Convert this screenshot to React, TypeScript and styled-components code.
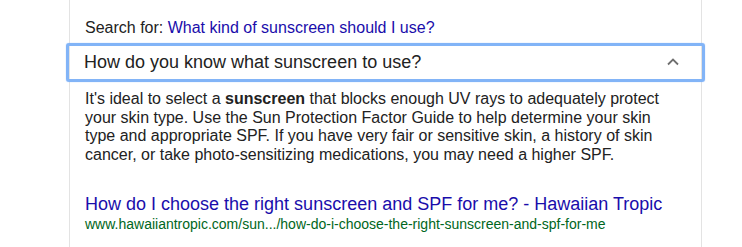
import styled, { createGlobalStyle } from "styled-components";

const GlobalStyle = createGlobalStyle`
  html, body {
    margin: 0;
    padding: 0;
    background: #ffffff;
  }
  body {
    font-family: "Liberation Sans", Arial, sans-serif;
    color: #222222;
    overflow: hidden;
  }
`;

const Card = styled.div`
  box-sizing: border-box;
  margin-left: 69px;
  width: 633px;
  height: 247px;
  border-left: 1px solid #e3e3e3;
  border-right: 1px solid #e3e3e3;
  padding-top: 19px;
`;

const SearchFor = styled.div`
  padding: 0 15px;
  font-size: 16px;
  line-height: 18px;
  color: #222222;

  a {
    color: #1a0dab;
    text-decoration: none;
  }
`;

const Question = styled.div`
  margin: 6px -4px 0;
  padding: 0 22px 0 15px;
  border: 3px solid #82b4f7;
  border-radius: 3px;
  box-shadow: 0 0 1px #82b4f7;
  display: flex;
  align-items: center;
  justify-content: space-between;
  font-size: 18px;
  line-height: 33px;
  color: #222222;
`;

const Chevron = styled.svg`
  width: 14px;
  height: 9px;
  display: block;
  margin-top: -2px;
`;

const Answer = styled.div`
  margin-top: 8px;
  padding: 0 26px 0 15px;
  font-size: 16px;
  line-height: 18.5px;
  color: #222222;

  b {
    font-weight: bold;
  }
`;

const Result = styled.div`
  margin-top: 29px;
  padding: 0 15px;
`;

const ResultTitle = styled.a`
  display: block;
  font-size: 18px;
  line-height: 22px;
  color: #1a0dab;
  text-decoration: none;
  white-space: nowrap;
`;

const ResultUrl = styled.div`
  font-size: 14px;
  line-height: 18px;
  color: #006621;
  white-space: nowrap;
`;

export default function App() {
  return (
    <>
      <GlobalStyle />
      <Card>
        <SearchFor>
          Search for: <a href="#">What kind of sunscreen should I use?</a>
        </SearchFor>
        <Question>
          <span>How do you know what sunscreen to use?</span>
          <Chevron viewBox="0 0 14 9">
            <polyline
              points="2,7.5 7,2.5 12,7.5"
              fill="none"
              stroke="#6f6f6f"
              strokeWidth="1.8"
            />
          </Chevron>
        </Question>
        <Answer>
          It's ideal to select a <b>sunscreen</b> that blocks enough UV rays to
          adequately protect your skin type. Use the Sun Protection Factor Guide
          to help determine your skin type and appropriate SPF. If you have very
          fair or sensitive skin, a history of skin cancer, or take
          photo-sensitizing medications, you may need a higher SPF.
        </Answer>
        <Result>
          <ResultTitle href="#">
            How do I choose the right sunscreen and SPF for me? - Hawaiian Tropic
          </ResultTitle>
          <ResultUrl>
            www.hawaiiantropic.com/sun.../how-do-i-choose-the-right-sunscreen-and-spf-for-me
          </ResultUrl>
        </Result>
      </Card>
    </>
  );
}
